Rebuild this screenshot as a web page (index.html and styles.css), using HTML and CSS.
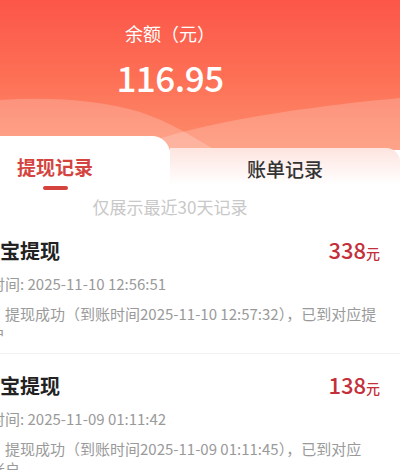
FILE: index.html
```html
<!DOCTYPE html>
<html>
<head>
    <title>提现记录</title>
    <link rel="stylesheet" href="styles.css">
</head>
<body>
    <div class="page">
        <div class="hero">
            <svg class="waves" viewBox="0 0 460 60" preserveAspectRatio="none">
                <path d="M0,18 C60,6 140,4 200,22 C230,32 250,45 275,60 L0,60 Z" fill="#ffffff" fill-opacity="0.2"/>
                <path d="M190,60 C230,40 330,20 460,8 L460,60 Z" fill="#ffffff" fill-opacity="0.2"/>
            </svg>
            <div class="hero-label">余额（元）</div>
            <div class="hero-amount">116.95</div>
        </div>

        <div class="tabs">
            <div class="tab active">
                <span>提现记录</span>
                <i class="tab-line"></i>
            </div>
            <div class="tab">
                <span>账单记录</span>
            </div>
        </div>

        <div class="notice">仅展示最近30天记录</div>

        <div class="record">
            <div class="record-head">
                <span class="record-title">支付宝提现</span>
                <span class="record-amount">338<small>元</small></span>
            </div>
            <div class="record-time">提现时间: 2025-11-10 12:56:51</div>
            <div class="record-desc">状态：提现成功（到账时间2025-11-10 12:57:32），已到对应提<br>现账户</div>
        </div>

        <div class="record">
            <div class="record-head">
                <span class="record-title">支付宝提现</span>
                <span class="record-amount">138<small>元</small></span>
            </div>
            <div class="record-time">提现时间: 2025-11-09 01:11:42</div>
            <div class="record-desc">状态：提现成功（到账时间2025-11-09 01:11:45），已到对应<br>提现账户</div>
        </div>
    </div>
</body>
</html>
```

FILE: styles.css
```css
body { margin: 0; overflow: hidden; background: #fff; font-family: "Noto Sans CJK SC", sans-serif; }
.page { width: 460px; margin-left: -60px; }

.hero { position: relative; height: 150px; padding-top: 20px; box-sizing: border-box; text-align: center; color: #fff; background: linear-gradient(180deg, #fc5649 0%, #fd6f55 50%, #fd8d6c 100%); }
.waves { position: absolute; left: 0; bottom: 0; width: 100%; height: 60px; }
.hero-label { position: relative; font-size: 18px; line-height: 26px; }
.hero-amount { position: relative; margin-top: 9px; font-size: 35px; line-height: 44px; font-weight: 500; letter-spacing: -0.5px; }

.tabs { position: relative; display: grid; grid-template-columns: 1fr 1fr; margin-top: -14px; }
.tab { display: flex; flex-direction: column; align-items: center; font-size: 19px; line-height: 28px; color: #333; font-weight: 500; }
.tab.active { background: #fff; border-top-right-radius: 18px; padding-top: 17px; height: 61px; box-sizing: border-box; color: #d4433e; font-weight: 700; }
.tab:not(.active) { margin-top: 12px; padding-top: 7px; border-top-right-radius: 14px; background: linear-gradient(180deg, #fde4df 0%, #fff 75%); }
.tab-line { display: block; width: 25px; height: 4px; margin-top: 5px; border-radius: 2px; background: #d4433e; }

.notice { text-align: center; font-size: 17px; line-height: 20px; color: #c8c8c8; }

.record { padding: 20px 20px 9px; border-bottom: 1px solid #f2f2f2; }
.record + .record { padding-top: 18px; }
.record-head { display: flex; justify-content: space-between; align-items: baseline; }
.record-title { font-size: 20px; line-height: 25px; font-weight: 700; color: #222; }
.record-amount { font-size: 22px; line-height: 25px; font-weight: 500; color: #c4303a; }
.record-amount small { font-size: 14px; }
.record-time { margin-top: 8px; font-size: 15px; line-height: 20px; color: #9a9a9a; }
.record-desc { margin-top: 10px; font-size: 15px; line-height: 20px; color: #9a9a9a; }
```
